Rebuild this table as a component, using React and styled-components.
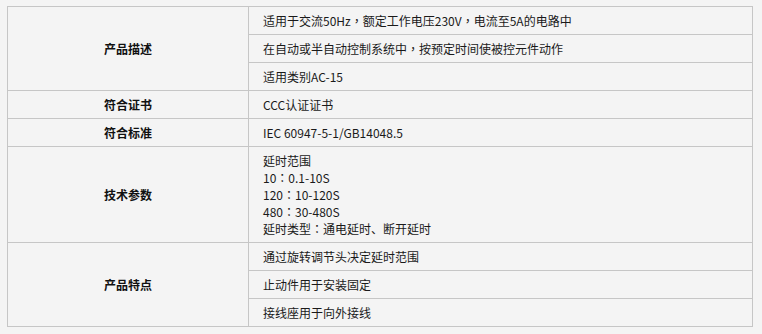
import React from "react";
import styled, { createGlobalStyle } from "styled-components";

const Global = createGlobalStyle`
  html, body { margin: 0; padding: 0; background: #f4f4f4; }
  body { font-family: "Noto Sans CJK SC", "Noto Sans", sans-serif; }
`;

const Page = styled.div`
  padding: 6px 0 0 7px;
`;

const Table = styled.table`
  width: 746px;
  border-collapse: collapse;
  table-layout: fixed;
  font-size: 12px;
  line-height: 17px;
  color: #1a1a1a;
  background: #f4f4f4;
  border: 1px solid #c6c6c6;
`;

const LabelCol = styled.col`
  width: 241px;
`;

const Label = styled.th`
  text-align: center;
  vertical-align: middle;
  font-weight: bold;
  border: 1px solid #c6c6c6;
  padding: 5px 14px;
  color: #111;
`;

const Cell = styled.td`
  text-align: left;
  vertical-align: middle;
  border: 1px solid #c6c6c6;
  padding: 5px 14px;
  white-space: nowrap;
`;

const Line = styled.div`
  line-height: 17px;
`;

const Punct = styled.span`
  font-family: "Noto Sans CJK TC", sans-serif;
`;

function Text({ children }) {
  const parts = children.split(/([，：])/);
  return parts.map((p, i) =>
    p === "，" || p === "：" ? <Punct key={i}>{p}</Punct> : <React.Fragment key={i}>{p}</React.Fragment>
  );
}

const groups = [
  {
    label: "产品描述",
    items: [
      ["适用于交流50Hz，额定工作电压230V，电流至5A的电路中"],
      ["在自动或半自动控制系统中，按预定时间使被控元件动作"],
      ["适用类别AC-15"],
    ],
  },
  { label: "符合证书", items: [["CCC认证证书"]] },
  { label: "符合标准", items: [["IEC 60947-5-1/GB14048.5"]] },
  {
    label: "技术参数",
    items: [
      [
        "延时范围",
        "10：0.1-10S",
        "120：10-120S",
        "480：30-480S",
        "延时类型：通电延时、断开延时",
      ],
    ],
  },
  {
    label: "产品特点",
    items: [
      ["通过旋转调节头决定延时范围"],
      ["止动件用于安装固定"],
      ["接线座用于向外接线"],
    ],
  },
];

export default function App() {
  return (
    <>
      <Global />
      <Page>
        <Table>
          <colgroup>
            <LabelCol />
            <col />
          </colgroup>
          <tbody>
            {groups.map((g) =>
              g.items.map((lines, i) => (
                <tr key={g.label + i}>
                  {i === 0 && <Label rowSpan={g.items.length}>{g.label}</Label>}
                  <Cell>
                    {lines.map((t) => (
                      <Line key={t}>
                        <Text>{t}</Text>
                      </Line>
                    ))}
                  </Cell>
                </tr>
              ))
            )}
          </tbody>
        </Table>
      </Page>
    </>
  );
}
